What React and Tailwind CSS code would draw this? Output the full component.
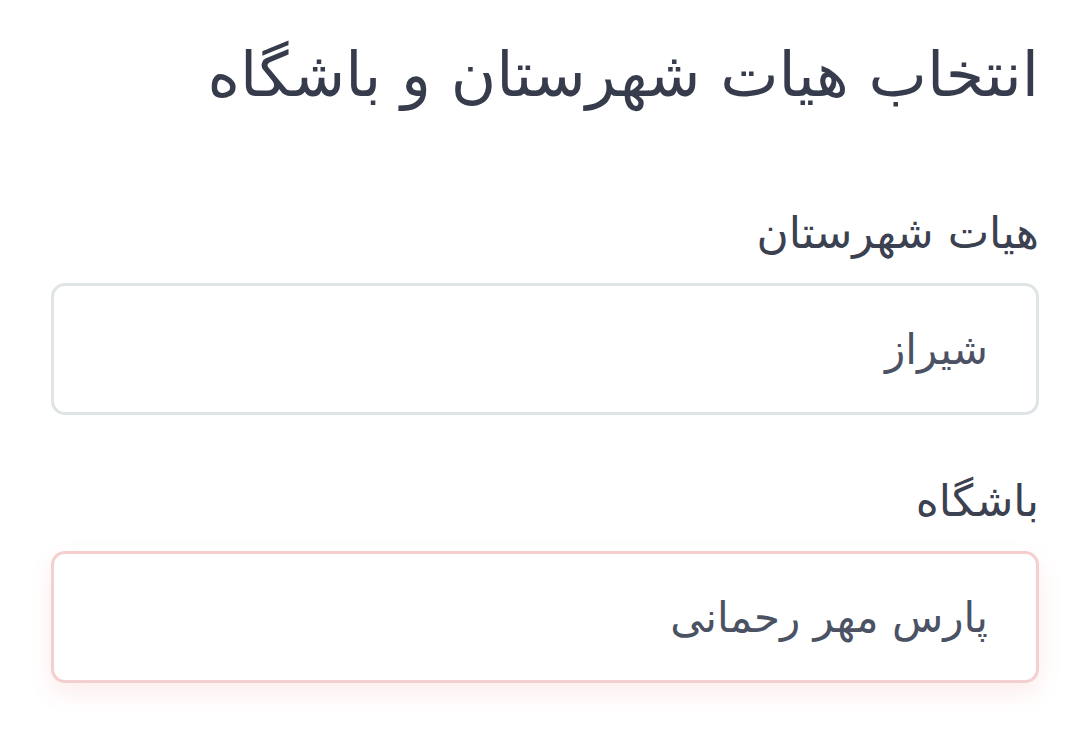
import React from "react";

function Field({ label, value, error, className }) {
  return (
    <div className={className}>
      <div className="text-[44px] leading-[56px] text-[#3b4150] mb-[22px]">{label}</div>
      <div
        className={
          "h-[132px] rounded-[14px] border-[3px] bg-white flex items-center pr-[48px] " +
          (error
            ? "border-[#f3cfcf] shadow-[0_10px_24px_rgba(239,68,68,0.10)]"
            : "border-[#dfe4e7]")
        }
      >
        <span className="text-[42px] text-[#4b5263]">{value}</span>
      </div>
    </div>
  );
}

export default function App() {
  return (
    <div
      dir="rtl"
      className="min-h-[750px] bg-white pl-[51px] pr-[41px] pt-[30px]"
      style={{ fontFamily: '"DejaVu Sans", sans-serif' }}
    >
      <h1 className="text-[62px] leading-[90px] text-[#363c4b]">انتخاب هیات شهرستان و باشگاه</h1>
      <Field className="mt-[85px]" label="هیات شهرستان" value="شیراز" />
      <Field className="mt-[58px]" label="باشگاه" value="پارس مهر رحمانی" error />
    </div>
  );
}
